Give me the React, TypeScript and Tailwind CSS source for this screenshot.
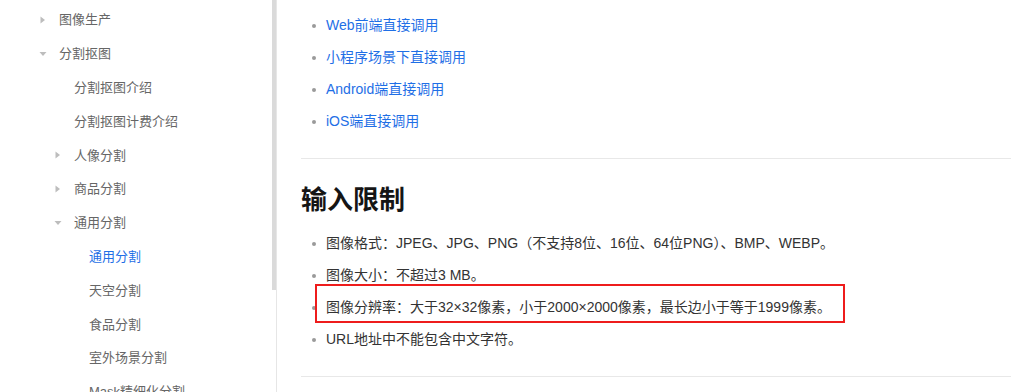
import React from "react";

const FONT = '"Liberation Sans", "Noto Sans CJK SC", sans-serif';

type NavItem = { label: string; level: number; arrow?: "right" | "down"; active?: boolean };

const nav: NavItem[] = [
  { label: "图像生产", level: 0, arrow: "right" },
  { label: "分割抠图", level: 0, arrow: "down" },
  { label: "分割抠图介绍", level: 1 },
  { label: "分割抠图计费介绍", level: 1 },
  { label: "人像分割", level: 1, arrow: "right" },
  { label: "商品分割", level: 1, arrow: "right" },
  { label: "通用分割", level: 1, arrow: "down" },
  { label: "通用分割", level: 2, active: true },
  { label: "天空分割", level: 2 },
  { label: "食品分割", level: 2 },
  { label: "室外场景分割", level: 2 },
  { label: "Mask精细化分割", level: 2 },
];

const padByLevel = ["pl-[59px]", "pl-[74px]", "pl-[89px]"];

function Arrow({ dir }: { dir: "right" | "down" }) {
  if (dir === "right") {
    return (
      <svg width="6" height="8" viewBox="0 0 6 8" className="absolute left-[-19px] top-1/2 -translate-y-1/2">
        <path d="M0.5 0.5 L5 4 L0.5 7.5 Z" fill="#bdbdbd" />
      </svg>
    );
  }
  return (
    <svg width="8" height="6" viewBox="0 0 8 6" className="absolute left-[-20px] top-1/2 -translate-y-1/2">
      <path d="M0.5 1 L7.5 1 L4 5 Z" fill="#bdbdbd" />
    </svg>
  );
}

function Sidebar() {
  return (
    <aside className="relative w-[277px] shrink-0 border-r border-[#e6e6e6] bg-white pt-[3px] overflow-hidden">
      <div className="absolute right-[0px] top-0 h-[290px] w-[4px] bg-[#dadada]" />
      {nav.map((n, i) => (
        <div key={i} className={`h-[33.8px] flex items-center ${padByLevel[n.level]}`}>
          <span
            className={`relative text-[13px] leading-none whitespace-nowrap ${n.active ? "text-[#1f6fe6]" : "text-[#666666]"}`}
          >
            {n.arrow && <Arrow dir={n.arrow} />}
            {n.label}
          </span>
        </div>
      ))}
    </aside>
  );
}

function Bullet({ children, className = "" }: { children: React.ReactNode; className?: string }) {
  return (
    <li className={`flex items-center h-[32px] ${className}`}>
      <span className="w-[4px] h-[4px] rounded-full bg-[#9a9a9a] ml-[11px] mr-[10px] shrink-0" />
      <span className="whitespace-nowrap">{children}</span>
    </li>
  );
}

function Content() {
  return (
    <main className="flex-1 pl-[24px] overflow-hidden">
      <ul className="pt-[9.5px] text-[14px] text-[#1f6fe6]">
        <Bullet>Web前端直接调用</Bullet>
        <Bullet>小程序场景下直接调用</Bullet>
        <Bullet>Android端直接调用</Bullet>
        <Bullet>iOS端直接调用</Bullet>
      </ul>
      <div className="mt-[20px] h-px bg-[#e8e8e8]" />
      <h2 className="mt-[23px] h-[36px] flex items-center text-[26px] font-bold text-[#151515] leading-none">输入限制</h2>
      <ul className="mt-[10px] text-[14px] text-[#333333]">
        <Bullet>图像格式：JPEG、JPG、PNG（不支持8位、16位、64位PNG）、BMP、WEBP。</Bullet>
        <Bullet>图像大小：不超过3 MB。</Bullet>
        <Bullet className="relative">
          图像分辨率：大于32×32像素，小于2000×2000像素，最长边小于等于1999像素。
          <span className="absolute left-[14px] top-[-8px] w-[530px] h-[39px] border-2 border-[#ee1c1c] pointer-events-none" />
        </Bullet>
        <Bullet>URL地址中不能包含中文字符。</Bullet>
      </ul>
      <div className="mt-[20px] h-px bg-[#e8e8e8]" />
    </main>
  );
}

export default function App() {
  return (
    <div className="w-[1011px] h-[392px] overflow-hidden bg-white flex" style={{ fontFamily: FONT }}>
      <Sidebar />
      <Content />
    </div>
  );
}
